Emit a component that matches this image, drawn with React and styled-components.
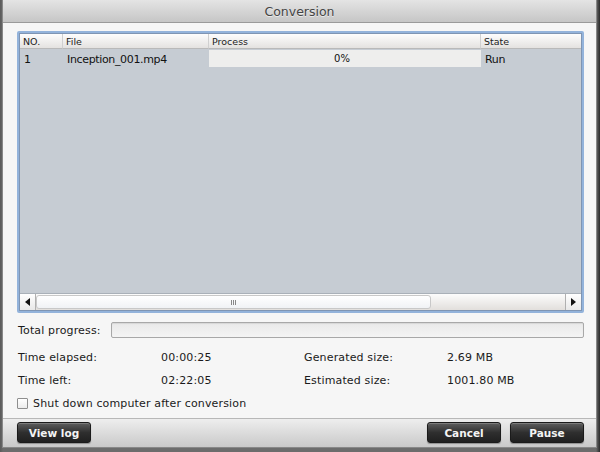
import React from 'react';
import styled, { createGlobalStyle } from 'styled-components';

const FONT = '"Lucida Grande", "DejaVu Sans", sans-serif';

const GlobalStyle = createGlobalStyle`
  html, body {
    margin: 0;
    padding: 0;
    background: #4b4b4b;
  }
  body {
    font-family: ${FONT};
  }
`;

const Page = styled.div`
  width: 600px;
  height: 452px;
  box-sizing: border-box;
  padding: 0 4px 5px 3px;
  background: linear-gradient(90deg, #5a5a5a 0, #6c6c6c 3px, #6c6c6c 596px, #2a2a2a 600px);
`;

const Window = styled.div`
  height: 100%;
  display: flex;
  flex-direction: column;
  background: #f6f6f6;
  box-shadow: 0 0 0 1px #888;
`;

const TitleBar = styled.div`
  height: 22px;
  flex: none;
  display: flex;
  align-items: center;
  justify-content: center;
  background: linear-gradient(#e4e4e4, #c6c6c6);
  border-bottom: 1px solid #9a9a9a;
  font-size: 12.5px;
  color: #444;
  text-shadow: 0 1px 0 rgba(255, 255, 255, 0.6);
`;

const Content = styled.div`
  flex: 1;
  padding: 8px 12px 0 14px;
  display: flex;
  flex-direction: column;
`;

const TableFrame = styled.div`
  height: 282px;
  box-sizing: border-box;
  border: 2px solid #93b3db;
  border-radius: 2px;
  box-shadow: inset 0 0 0 1px #7f95b3;
  padding: 1px;
  display: flex;
  flex-direction: column;
  background: #c6ccd3;
`;

const Grid = styled.div`
  flex: 1;
  display: grid;
  grid-template-columns: 43px 146px 272px 1fr;
  grid-auto-rows: min-content;
  font-size: 11px;
  letter-spacing: -0.35px;
  color: #111;
`;

const HeadCell = styled.div`
  height: 15px;
  box-sizing: border-box;
  padding-left: 3px;
  display: flex;
  align-items: center;
  font-size: 9.5px;
  letter-spacing: 0;
  color: #222;
  background: linear-gradient(#fdfdfd, #e4e2e0);
  border-bottom: 1px solid #b9b9b9;
  border-right: ${p => (p.$last ? 'none' : '1px solid #d0d0d0')};
`;

const Cell = styled.div`
  height: 18px;
  display: flex;
  align-items: center;
  padding-left: 4px;
  padding-top: 1px;
`;

const ProcessCell = styled.div`
  height: 17px;
  margin-top: 1px;
  display: flex;
  align-items: center;
  justify-content: center;
  background: #eeeeed;
  font-size: 10px;
  letter-spacing: 0;
  padding-right: 6px;
`;

const ScrollBar = styled.div`
  height: 16px;
  flex: none;
  display: flex;
  background: linear-gradient(#fcfcfc, #e2dfdc);
  border-top: 1px solid #a9b0b8;
`;

const Arrow = styled.div`
  width: 15px;
  flex: none;
  display: flex;
  align-items: center;
  justify-content: center;
  background: linear-gradient(#ffffff, #e8e8e8);
  border-${p => (p.$side === 'left' ? 'right' : 'left')}: 1px solid #b0b0b0;
`;

const Track = styled.div`
  flex: 1;
  display: flex;
  padding: 1px 0;
`;

const Thumb = styled.div`
  width: 395px;
  box-sizing: border-box;
  border: 1px solid #c8c8c8;
  border-radius: 3px;
  background: linear-gradient(#ffffff, #f0f2f5);
  display: flex;
  align-items: center;
  justify-content: center;
`;

const Grip = styled.span`
  width: 5px;
  height: 5px;
  border-left: 1px solid #888;
  border-right: 1px solid #888;
  box-sizing: border-box;
  position: relative;
  &::after {
    content: '';
    position: absolute;
    left: 1px;
    top: 0;
    width: 1px;
    height: 5px;
    background: #888;
  }
`;

const Text = styled.span`
  font-size: 11px;
  letter-spacing: 0.15px;
  color: #1a1a1a;
`;

const ProgressLabel = styled(Text)`
  width: 93px;
  flex: none;
`;

const ProgressRow = styled.div`
  margin-top: 9px;
  height: 16px;
  display: flex;
  align-items: center;
  padding-left: 1px;
`;

const ProgressBar = styled.div`
  flex: 1;
  height: 16px;
  box-sizing: border-box;
  border: 1px solid #a8a8a8;
  border-radius: 2px;
  background: linear-gradient(#e9e9e9, #f4f4f4);
  box-shadow: inset 0 1px 1px rgba(0, 0, 0, 0.08);
`;

const InfoGrid = styled.div`
  margin-top: 8px;
  display: grid;
  grid-template-columns: 143px 143px 143px 1fr;
  grid-auto-rows: 23px;
  align-items: center;
  padding-left: 1px;
`;

const CheckRow = styled.label`
  margin-top: 1px;
  height: 20px;
  display: flex;
  align-items: center;
  gap: 5px;
`;

const CheckBox = styled.span`
  width: 11px;
  height: 11px;
  box-sizing: border-box;
  border: 1px solid #8e8e8e;
  border-radius: 1px;
  background: linear-gradient(#ffffff, #ececec);
`;

const BottomBar = styled.div`
  height: 29px;
  flex: none;
  box-sizing: border-box;
  padding: 3px 12px 0 14px;
  display: flex;
  gap: 9px;
  border-top: 1px solid #b8b8b8;
  background: linear-gradient(#eeeeee, #c9c9c9);
`;

const Spacer = styled.div`
  flex: 1;
`;

const Button = styled.button`
  width: 74px;
  height: 21px;
  padding: 0;
  border: 1px solid #1b1b1b;
  border-radius: 3px;
  background: linear-gradient(#5e5e5e, #2f2f2f 50%, #202020);
  color: #f4f4f4;
  font-family: ${FONT};
  font-size: 10.5px;
  font-weight: bold;
  box-shadow: inset 0 1px 0 rgba(255, 255, 255, 0.2), 0 1px 1px rgba(0, 0, 0, 0.3);
`;

function TriangleIcon({ dir }) {
  const d = dir === 'left' ? 'M6 0 L6 8 L1 4 Z' : 'M1 0 L1 8 L6 4 Z';
  return (
    <svg width="7" height="8" viewBox="0 0 7 8">
      <path d={d} fill="#111" />
    </svg>
  );
}

export default function App() {
  return (
    <Page>
      <GlobalStyle />
      <Window>
        <TitleBar>Conversion</TitleBar>
        <Content>
          <TableFrame>
            <Grid>
              <HeadCell>NO.</HeadCell>
              <HeadCell>File</HeadCell>
              <HeadCell>Process</HeadCell>
              <HeadCell $last>State</HeadCell>
              <Cell>1</Cell>
              <Cell>Inception_001.mp4</Cell>
              <ProcessCell>0%</ProcessCell>
              <Cell>Run</Cell>
            </Grid>
            <ScrollBar>
              <Arrow $side="left">
                <TriangleIcon dir="left" />
              </Arrow>
              <Track>
                <Thumb>
                  <Grip />
                </Thumb>
              </Track>
              <Arrow $side="right">
                <TriangleIcon dir="right" />
              </Arrow>
            </ScrollBar>
          </TableFrame>

          <ProgressRow>
            <ProgressLabel>Total progress:</ProgressLabel>
            <ProgressBar />
          </ProgressRow>

          <InfoGrid>
            <Text>Time elapsed:</Text>
            <Text>00:00:25</Text>
            <Text>Generated size:</Text>
            <Text>2.69 MB</Text>
            <Text>Time left:</Text>
            <Text>02:22:05</Text>
            <Text>Estimated size:</Text>
            <Text>1001.80 MB</Text>
          </InfoGrid>

          <CheckRow>
            <CheckBox />
            <Text>Shut down computer after conversion</Text>
          </CheckRow>
        </Content>
        <BottomBar>
          <Button>View log</Button>
          <Spacer />
          <Button>Cancel</Button>
          <Button>Pause</Button>
        </BottomBar>
      </Window>
    </Page>
  );
}
